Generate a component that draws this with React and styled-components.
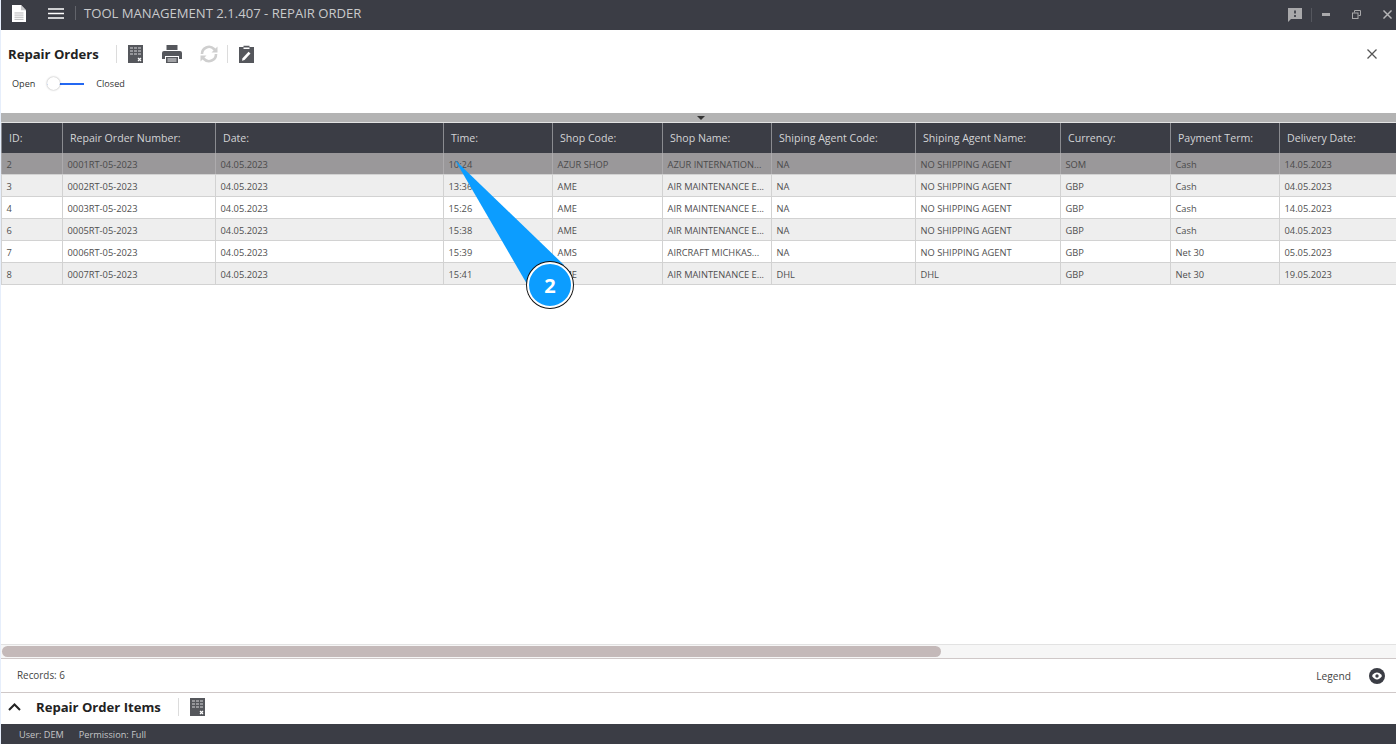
import React from "react";
import styled, { createGlobalStyle } from "styled-components";

const columns = [
  { key: "id", label: "ID:" },
  { key: "number", label: "Repair Order Number:" },
  { key: "date", label: "Date:" },
  { key: "time", label: "Time:" },
  { key: "shopCode", label: "Shop Code:" },
  { key: "shopName", label: "Shop Name:" },
  { key: "agentCode", label: "Shiping Agent Code:" },
  { key: "agentName", label: "Shiping Agent Name:" },
  { key: "currency", label: "Currency:" },
  { key: "term", label: "Payment Term:" },
  { key: "delivery", label: "Delivery Date:" },
];

const rows = [
  ["2", "0001RT-05-2023", "04.05.2023", "10:24", "AZUR SHOP", "AZUR INTERNATION...", "NA", "NO SHIPPING AGENT", "SOM", "Cash", "14.05.2023"],
  ["3", "0002RT-05-2023", "04.05.2023", "13:36", "AME", "AIR MAINTENANCE E...", "NA", "NO SHIPPING AGENT", "GBP", "Cash", "04.05.2023"],
  ["4", "0003RT-05-2023", "04.05.2023", "15:26", "AME", "AIR MAINTENANCE E...", "NA", "NO SHIPPING AGENT", "GBP", "Cash", "14.05.2023"],
  ["6", "0005RT-05-2023", "04.05.2023", "15:38", "AME", "AIR MAINTENANCE E...", "NA", "NO SHIPPING AGENT", "GBP", "Cash", "04.05.2023"],
  ["7", "0006RT-05-2023", "04.05.2023", "15:39", "AMS", "AIRCRAFT MICHKAS...", "NA", "NO SHIPPING AGENT", "GBP", "Net 30", "05.05.2023"],
  ["8", "0007RT-05-2023", "04.05.2023", "15:41", "AME", "AIR MAINTENANCE E...", "DHL", "DHL", "GBP", "Net 30", "19.05.2023"],
];

const GlobalStyle = createGlobalStyle`
  html, body {
    margin: 0;
    padding: 0;
    background: #fff;
    overflow: hidden;
  }
  body {
    font-family: "Open Sans", "Noto Sans", sans-serif;
  }
`;

function SheetIcon() {
  return (
    <svg width="15" height="18" viewBox="0 0 15 18">
      <rect width="15" height="18" fill="#55575c" />
      <g fill="#96979b">
        <rect x="2" y="2" width="3" height="2" />
        <rect x="6" y="2" width="3" height="2" />
        <rect x="10" y="2" width="3" height="2" />
        <rect x="2" y="5" width="3" height="2" />
        <rect x="6" y="5" width="3" height="2" />
        <rect x="10" y="5" width="3" height="2" />
        <rect x="2" y="8" width="3" height="2" />
        <rect x="6" y="8" width="3" height="2" />
        <rect x="10" y="8" width="3" height="2" />
      </g>
      <path d="M10 13l3 3M13 13l-3 3" stroke="#fff" strokeWidth="1.2" />
    </svg>
  );
}

function PrinterIcon() {
  return (
    <svg width="20" height="18" viewBox="0 0 20 18">
      <path d="M4.5 0h11v5h-11z" fill="#55575c" />
      <path d="M2 6h16a2 2 0 0 1 2 2v6h-3v-3H3v3H0V8a2 2 0 0 1 2-2z" fill="#55575c" />
      <path d="M4 12h12v6H4z" fill="#55575c" />
      <path d="M5.5 14h9M5.5 16h9" stroke="#fff" strokeWidth="0.9" />
    </svg>
  );
}

function RefreshIcon() {
  return (
    <svg width="20" height="18" viewBox="0 0 20 18" fill="none">
      <path d="M3 9a7 7 0 0 1 12-5l1.5 1.5" stroke="#cfcfcf" strokeWidth="2.6" />
      <path d="M17 9a7 7 0 0 1-12 5l-1.5-1.500" stroke="#cfcfcf" strokeWidth="2.6" />
      <path d="M18.500 1.500v6h-6z" fill="#cfcfcf" />
      <path d="M1.500 16.500v-6h6z" fill="#cfcfcf" />
    </svg>
  );
}

function ClipboardIcon() {
  return (
    <svg width="15" height="18" viewBox="0 0 15 18">
      <path d="M0 2h4.500V0.800h6V2H15v16H0z" fill="#55575c" />
      <path d="M4.500 2.500h6v1.500h-6z" fill="#fff" />
      <path d="M3.500 13.200l6-6.500 2 1.800-6 6.500-2.500 .8z" fill="#fff" />
    </svg>
  );
}

function DocIcon() {
  return (
    <svg width="14" height="17" viewBox="0 0 14 16" preserveAspectRatio="none">
      <path d="M0 0h9l5 5v11H0z" fill="#fff" />
      <path d="M9 0v5h5z" fill="#c7c8ca" />
      <path d="M2.500 7.500h9M2.500 9.500h9M2.500 11.500h9M2.500 13.500h9" stroke="#a5a6a9" strokeWidth="0.8" />
    </svg>
  );
}

function MenuIcon() {
  return (
    <svg width="16" height="11" viewBox="0 0 16 11">
      <path d="M0 1h16M0 5.500h16M0 10h16" stroke="#fff" strokeWidth="1.500" />
    </svg>
  );
}

function FeedbackIcon() {
  return (
    <svg width="14" height="15" viewBox="0 0 14 15">
      <path d="M0 1h14v11H3l-3 3z" fill="#a9a9ab" />
      <path d="M7 3.500v3M7 8v2" stroke="#3b3d45" strokeWidth="1.700" />
    </svg>
  );
}

function MinimizeIcon() {
  return (
    <svg width="8" height="3" viewBox="0 0 8 3">
      <rect width="8" height="3" fill="#a9a9ab" />
    </svg>
  );
}

function RestoreIcon() {
  return (
    <svg width="9" height="9" viewBox="0 0 9 9" fill="none" stroke="#a9a9ab">
      <path d="M2.500 2.500V.5h6v5h-2" />
      <rect x=".5" y="3" width="5.500" height="5.500" />
    </svg>
  );
}

function CloseIcon({ size, color, weight }) {
  return (
    <svg width={size} height={size} viewBox="0 0 10 10">
      <path d="M.5.5l9 9M9.500.5l-9 9" stroke={color} strokeWidth={weight} fill="none" />
    </svg>
  );
}

function ChevronIcon() {
  return (
    <svg width="13" height="8" viewBox="0 0 13 8">
      <path d="M1 7l5.500-5.500L12 7" stroke="#222" strokeWidth="2" fill="none" />
    </svg>
  );
}

function EyeIcon() {
  return (
    <svg width="16" height="16" viewBox="0 0 16 16">
      <circle cx="8" cy="8" r="8" fill="#3b3d45" />
      <path d="M3 8c1.500-2.400 3.200-3.400 5-3.400S11.500 5.600 13 8c-1.500 2.400-3.200 3.400-5 3.400S4.500 10.400 3 8z" fill="#fff" />
      <circle cx="8" cy="8" r="1.700" fill="#3b3d45" />
    </svg>
  );
}

function App() {
  return (
    <>
      <GlobalStyle />
      <Page>
        <TitleBar>
          <TitleLeft>
            <DocIcon />
            <MenuButton>
              <MenuIcon />
            </MenuButton>
            <TitleDivider />
            <TitleText>TOOL MANAGEMENT 2.1.407 - REPAIR ORDER</TitleText>
          </TitleLeft>
          <WindowControls>
            <FeedbackIcon />
            <ControlDivider />
            <MinimizeIcon />
            <RestoreIcon />
            <CloseIcon size={9} color="#b5b5b7" weight={1.6} />
          </WindowControls>
        </TitleBar>

        <Toolbar>
          <ToolbarRow>
            <PageTitle>Repair Orders</PageTitle>
            <ToolDivider $gap={17} />
            <ToolIcon $width={37}>
              <SheetIcon />
            </ToolIcon>
            <ToolIcon $width={37}>
              <PrinterIcon />
            </ToolIcon>
            <ToolIcon $width={36}>
              <RefreshIcon />
            </ToolIcon>
            <ToolDivider $gap={0} />
            <ToolIcon $width={37}>
              <ClipboardIcon />
            </ToolIcon>
            <ToolClose>
              <CloseIcon size={10} color="#555" weight={1.300} />
            </ToolClose>
          </ToolbarRow>
          <SwitchRow>
            <SwitchLabel>Open</SwitchLabel>
            <Switch>
              <SwitchKnob />
            </Switch>
            <SwitchLabel>Closed</SwitchLabel>
          </SwitchRow>
        </Toolbar>

        <CollapseStrip>
          <CollapseArrow />
        </CollapseStrip>

        <TableArea>
          <HeaderRow>
            {columns.map((col) => (
              <HeaderCell key={col.key}>{col.label}</HeaderCell>
            ))}
          </HeaderRow>
          {rows.map((row, i) => (
            <DataRow key={row[0]} $selected={i === 0} $striped={i % 2 === 1}>
              {row.map((value, j) => (
                <DataCell key={columns[j].key} $selected={i === 0}>
                  {value}
                </DataCell>
              ))}
            </DataRow>
          ))}
          <CalloutTail viewBox="0 0 130 170" width="130" height="170">
            <path d="M6 8L115 113L82 139z" fill="#0c9dff" />
          </CalloutTail>
          <CalloutBadge>2</CalloutBadge>
        </TableArea>

        <ScrollTrack>
          <ScrollThumb />
        </ScrollTrack>

        <RecordsBar>
          <RecordsText>Records: 6</RecordsText>
          <LegendWrap>
            <LegendText>Legend</LegendText>
            <EyeIcon />
          </LegendWrap>
        </RecordsBar>

        <ItemsBar>
          <ChevronIcon />
          <ItemsTitle>Repair Order Items</ItemsTitle>
          <ToolDivider $gap={17} />
          <ItemsIcon>
            <SheetIcon />
          </ItemsIcon>
        </ItemsBar>

        <StatusBar>
          <StatusText>User: DEM</StatusText>
          <StatusText>Permission: Full</StatusText>
        </StatusBar>
      </Page>
    </>
  );
}

const Page = styled.div`
  width: 1396px;
  height: 744px;
  display: flex;
  flex-direction: column;
  overflow: hidden;
  box-sizing: border-box;
  border-left: 1px solid #e6eefb;
  background: #fff;
`;

const TitleBar = styled.div`
  height: 30px;
  margin-left: -1px;
  flex: none;
  display: flex;
  align-items: center;
  justify-content: space-between;
  padding: 0 4px 0 12px;
  background: #3b3d45;
`;

const TitleLeft = styled.div`
  display: flex;
  align-items: center;
  padding-bottom: 4px;
`;

const MenuButton = styled.div`
  display: flex;
  margin-left: 22px;
`;

const TitleDivider = styled.div`
  width: 1px;
  height: 14px;
  margin: 0 8px 0 11px;
  background: #62646b;
`;

const TitleText = styled.div`
  color: #c9cacc;
  font-size: 13.100px;
  white-space: nowrap;
`;

const WindowControls = styled.div`
  display: flex;
  align-items: center;
  gap: 22px;
  padding-bottom: 1px;
`;

const ControlDivider = styled.div`
  width: 1px;
  height: 14px;
  margin: 0 -12px 0 -13px;
  background: #55575e;
`;

const Toolbar = styled.div`
  height: 83px;
  flex: none;
  box-sizing: border-box;
  padding-left: 7px;
`;

const ToolbarRow = styled.div`
  height: 48px;
  display: flex;
  align-items: center;
`;

const PageTitle = styled.div`
  font-size: 13.100px;
  font-weight: 700;
  color: #222;
  white-space: nowrap;
`;

const ToolDivider = styled.div`
  width: 1px;
  height: 18px;
  flex: none;
  margin-left: ${(props) => props.$gap}px;
  background: #dcdcdc;
`;

const ToolIcon = styled.div`
  width: ${(props) => props.$width}px;
  display: flex;
  justify-content: center;
`;

const ToolClose = styled.div`
  display: flex;
  margin-left: auto;
  margin-right: 19px;
`;

const SwitchRow = styled.div`
  display: flex;
  align-items: center;
  padding-left: 4px;
  margin-top: -1px;
`;

const SwitchLabel = styled.span`
  font-size: 9.100px;
  color: #333;
`;

const Switch = styled.div`
  position: relative;
  width: 37px;
  height: 2px;
  margin: 0 12px;
  background: #2468f2;
`;

const SwitchKnob = styled.div`
  position: absolute;
  left: 0;
  top: -6px;
  width: 13px;
  height: 13px;
  border-radius: 50%;
  background: #fff;
  box-shadow: 0 0 2px rgba(0, 0, 0, 0.4);
`;

const CollapseStrip = styled.div`
  height: 10px;
  flex: none;
  margin-left: -1px;
  display: flex;
  justify-content: center;
  align-items: center;
  background: #b3b3b3;
  box-shadow: inset 0 -1px 0 #e3e3e3;
`;

const CollapseArrow = styled.div`
  margin-left: 6px;
  border-left: 4px solid transparent;
  border-right: 4px solid transparent;
  border-top: 4px solid #333;
`;

const TableArea = styled.div`
  position: relative;
  flex: 1;
  min-height: 0;
  overflow: hidden;
`;

const gridColumns = "61px 153px 228px 109px 110px 109px 144px 145px 110px 109px 117px";

const HeaderRow = styled.div`
  display: grid;
  grid-template-columns: ${gridColumns};
  height: 30px;
  background: #3b3d45;
`;

const HeaderCell = styled.div`
  display: flex;
  align-items: center;
  padding-left: 7px;
  border-left: 1px solid #8a8b90;
  color: #d3d4d6;
  font-size: 10.600px;
  white-space: nowrap;
  overflow: hidden;
`;

const DataRow = styled.div`
  display: grid;
  grid-template-columns: ${gridColumns};
  height: 22px;
  box-sizing: border-box;
  border-bottom: 1px solid #d2d2d2;
  background: ${(props) =>
    props.$selected ? "#9a989a" : props.$striped ? "#eeeeee" : "#fff"};
`;

const DataCell = styled.div`
  display: flex;
  align-items: center;
  padding: 1px 0 0 4.500px;
  border-left: 1px solid ${(props) => (props.$selected ? "#adabad" : "#d2d2d2")};
  color: ${(props) => (props.$selected ? "#4a4a4a" : "#4f4f4f")};
  font-size: 9.300px;
  white-space: nowrap;
  overflow: hidden;
`;

const CalloutTail = styled.svg`
  position: absolute;
  left: 448px;
  top: 29px;
`;

const CalloutBadge = styled.div`
  position: absolute;
  left: 526px;
  top: 139px;
  width: 46px;
  height: 46px;
  box-sizing: border-box;
  display: flex;
  align-items: center;
  justify-content: center;
  border-radius: 50%;
  background: #0c9dff;
  border: 2px solid #fff;
  box-shadow: 0 0 0 1px #111;
  color: #fff;
  font-size: 20px;
  font-weight: 700;
`;

const ScrollTrack = styled.div`
  height: 15px;
  flex: none;
  box-sizing: border-box;
  padding: 1px 0 1px 1px;
  background: #f6f6f6;
  border-top: 1px solid #e2e2e2;
  border-bottom: 1px solid #cfc8c8;
`;

const ScrollThumb = styled.div`
  width: 939px;
  height: 100%;
  border-radius: 6px;
  background: #c4b9b9;
`;

const RecordsBar = styled.div`
  height: 34px;
  flex: none;
  box-sizing: border-box;
  display: flex;
  align-items: center;
  justify-content: space-between;
  padding: 0 11px 0 16px;
  border-bottom: 1px solid #cfc8c8;
`;

const RecordsText = styled.span`
  font-size: 9.900px;
  color: #444;
  margin-bottom: 2px;
`;

const LegendWrap = styled.div`
  display: flex;
  align-items: center;
  gap: 18px;
`;

const LegendText = styled.span`
  font-size: 10.200px;
  color: #444;
`;

const ItemsBar = styled.div`
  height: 31px;
  flex: none;
  box-sizing: border-box;
  display: flex;
  align-items: center;
  padding: 0 0 3px 7px;
`;

const ItemsTitle = styled.span`
  margin-left: 15px;
  font-size: 13.100px;
  font-weight: 700;
  color: #222;
`;

const ItemsIcon = styled.div`
  display: flex;
  margin-left: 11px;
`;

const StatusBar = styled.div`
  height: 20px;
  flex: none;
  margin-left: -1px;
  display: flex;
  align-items: center;
  gap: 15px;
  padding-left: 19px;
  background: #3b3d45;
`;

const StatusText = styled.span`
  font-size: 9.200px;
  color: #c4c5c8;
`;

export default App;
